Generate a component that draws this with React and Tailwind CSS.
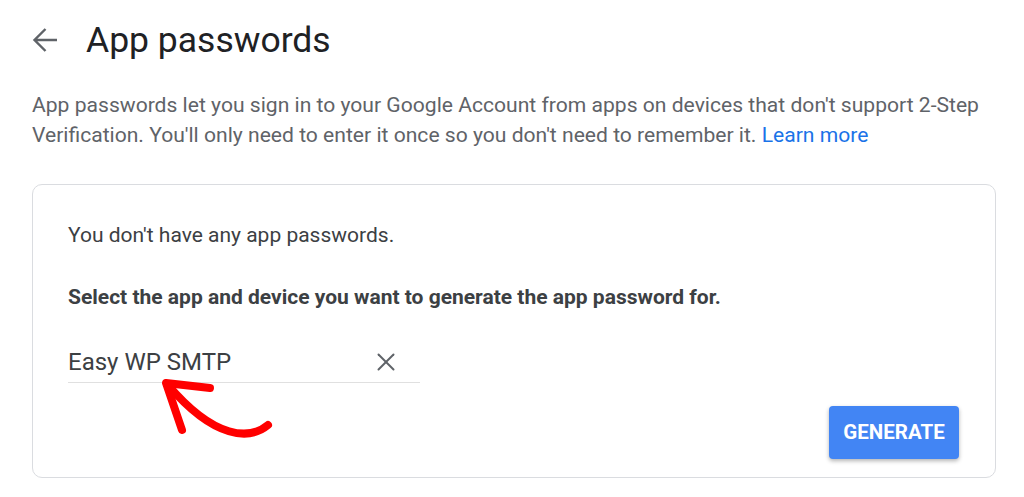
import { X } from 'lucide-react'

function BackArrow() {
  return (
    <svg width="26" height="26" viewBox="0 0 26 26" className="text-[#5f6368]">
      <path d="M25 13H2.5M13.5 2L2.5 13l11 11" stroke="currentColor" strokeWidth="2.4" fill="none" />
    </svg>
  )
}

export default function App() {
  return (
    <div className="relative w-[1024px] h-[497px] bg-white font-['Roboto',sans-serif] overflow-hidden">
      <div className="flex items-center pt-[18px] pl-[32px]">
        <BackArrow />
        <h1 className="ml-[28px] text-[35.5px] leading-[44px] text-[#202124]">App passwords</h1>
      </div>

      <p className="mt-[28px] px-[32px] text-[21.1px] leading-[30px] text-[#5f6368] whitespace-nowrap">
        App passwords let you sign in to your Google Account from apps on devices that don't support 2-Step
        <br />
        Verification. You'll only need to enter it once so you don't need to remember it.{' '}
        <a className="text-[#1a73e8]">Learn more</a>
      </p>

      <div className="mx-[32px] mt-[34px] w-[964px] h-[294px] border border-[#dadce0] rounded-[10px] px-[35px] pt-[37px] flex flex-col">
        <p className="text-[21px] leading-[26px] text-[#3c4043]">You don't have any app passwords.</p>
        <p className="mt-[36px] text-[21px] leading-[26px] font-bold text-[#3c4043]">
          Select the app and device you want to generate the app password for.
        </p>
        <div className="mt-[38px] w-[352px] h-[35px] flex items-start justify-between border-b border-[#e0e0e0]">
          <span className="text-[24px] leading-[28px] text-[#3c4043]">Easy WP SMTP</span>
          <X className="w-[30px] h-[30px] -mt-[1px] mr-[19px] text-[#5f6368]" strokeWidth={1.6} />
        </div>
        <div className="flex justify-end mt-[23px] mr-[1px]">
          <button className="w-[130px] h-[53px] bg-[#4285f4] rounded-[4px] shadow-[0_2px_4px_rgba(0,0,0,0.3)] text-white text-[20.5px] font-bold">
            GENERATE
          </button>
        </div>
      </div>

      <svg className="absolute left-0 top-0 pointer-events-none" width="1024" height="497">
        <path d="M268 425 C 250 440, 215 440, 168 385" stroke="#ff0000" strokeWidth="8" fill="none" strokeLinecap="round" />
        <path d="M210 388 L 166 383 L 182 430" stroke="#ff0000" strokeWidth="8" fill="none" strokeLinecap="round" strokeLinejoin="round" />
      </svg>
    </div>
  )
}
